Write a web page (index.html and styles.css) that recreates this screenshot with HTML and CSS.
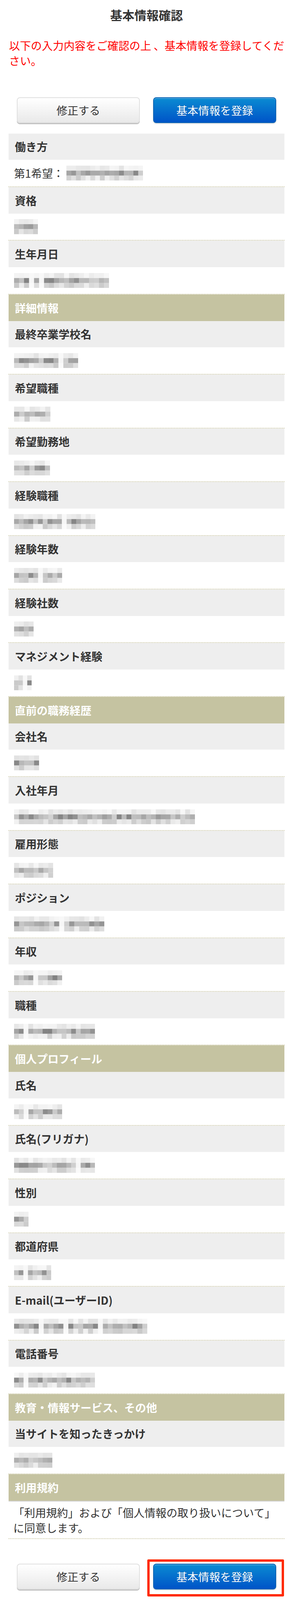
FILE: index.html
```html
<!DOCTYPE html>
<html lang="ja">
<head>
    <meta charset="UTF-8">
    <meta name="viewport" content="width=device-width, initial-scale=1.0">
    <title>基本情報確認</title>
    <link rel="stylesheet" href="styles.css">
</head>
<body>
    <h1 class="page-title">基本情報確認</h1>
    <p class="notice">以下の入力内容をご確認の上 、基本情報を登録してください。</p>

    <div class="btn-row">
        <button class="btn btn-back">修正する</button>
        <button class="btn btn-submit">基本情報を登録</button>
    </div>

    <div class="confirm-list">
        <div class="label">働き方</div>
        <div class="value">第1希望：<span class="mosaic mosaic-inline" data-w="196"></span></div>
        <div class="label">資格</div>
        <div class="value"><span class="mosaic" data-w="61"></span></div>
        <div class="label">生年月日</div>
        <div class="value"><span class="mosaic" data-w="243"></span></div>

        <div class="section">詳細情報</div>
        <div class="label">最終卒業学校名</div>
        <div class="value"><span class="mosaic" data-w="164"></span></div>
        <div class="label">希望職種</div>
        <div class="value"><span class="mosaic" data-w="93"></span></div>
        <div class="label">希望勤務地</div>
        <div class="value"><span class="mosaic" data-w="92"></span></div>
        <div class="label">経験職種</div>
        <div class="value"><span class="mosaic" data-w="208"></span></div>
        <div class="label">経験年数</div>
        <div class="value"><span class="mosaic" data-w="123"></span></div>
        <div class="label">経験社数</div>
        <div class="value"><span class="mosaic" data-w="50"></span></div>
        <div class="label">マネジメント経験</div>
        <div class="value"><span class="mosaic" data-w="45"></span></div>

        <div class="section">直前の職務経歴</div>
        <div class="label">会社名</div>
        <div class="value"><span class="mosaic" data-w="64"></span></div>
        <div class="label">入社年月</div>
        <div class="value"><span class="mosaic" data-w="463"></span></div>
        <div class="label">雇用形態</div>
        <div class="value"><span class="mosaic" data-w="100"></span></div>
        <div class="label">ポジション</div>
        <div class="value"><span class="mosaic" data-w="231"></span></div>
        <div class="label">年収</div>
        <div class="value"><span class="mosaic" data-w="123"></span></div>
        <div class="label">職種</div>
        <div class="value"><span class="mosaic" data-w="207"></span></div>

        <div class="section">個人プロフィール</div>
        <div class="label">氏名</div>
        <div class="value"><span class="mosaic" data-w="123"></span></div>
        <div class="label">氏名(フリガナ)</div>
        <div class="value"><span class="mosaic" data-w="207"></span></div>
        <div class="label">性別</div>
        <div class="value"><span class="mosaic" data-w="37"></span></div>
        <div class="label">都道府県</div>
        <div class="value"><span class="mosaic" data-w="95"></span></div>
        <div class="label">E-mail(ユーザーID)</div>
        <div class="value"><span class="mosaic" data-w="341"></span></div>
        <div class="label">電話番号</div>
        <div class="value"><span class="mosaic" data-w="207"></span></div>

        <div class="section">教育・情報サービス、その他</div>
        <div class="label">当サイトを知ったきっかけ</div>
        <div class="value"><span class="mosaic" data-w="98"></span></div>

        <div class="section">利用規約</div>
        <div class="agree">「利用規約」および「個人情報の取り扱いについて」に同意します。</div>
    </div>

    <div class="btn-row btn-row-bottom">
        <button class="btn btn-back">修正する</button>
        <button class="btn btn-submit">基本情報を登録</button>
        <div class="highlight"></div>
    </div>

    <script>
        // blurred values are drawn as grey mosaic cells
        let seed = 7;
        function rand() {
            seed = (seed * 9301 + 49297) % 233280;
            return seed / 233280;
        }

        function grey(v) {
            v = Math.round(v);
            return 'rgb(' + v + ',' + v + ',' + v + ')';
        }

        document.querySelectorAll('.mosaic').forEach(span => {
            const w = parseInt(span.dataset.w, 10);
            const cols = Math.max(2, Math.round(w / 12.5));
            const cw = w / cols;
            let rects = '';
            for (let c = 0; c < cols; c++) {
                const gap = c > 0 && c < cols - 1 && rand() < 0.07;
                const x = (c * cw).toFixed(2);
                const top = gap ? 248 : 226 + rand() * 22;
                const mid = gap ? 246 : (rand() < 0.2 ? 130 + rand() * 25 : 160 + rand() * 50);
                const bot = gap ? 250 : 200 + rand() * 42;
                rects += `<rect x="${x}" y="0" width="${(cw + 0.5).toFixed(2)}" height="14" fill="${grey(top)}"/>`;
                rects += `<rect x="${x}" y="14" width="${(cw + 0.5).toFixed(2)}" height="14" fill="${grey(mid)}"/>`;
                rects += `<rect x="${x}" y="28" width="${(cw + 0.5).toFixed(2)}" height="14" fill="${grey(bot)}"/>`;
            }
            span.innerHTML = `<svg width="${w}" height="42" viewBox="0 0 ${w} 42" preserveAspectRatio="none">${rects}</svg>`;
        });
    </script>
</body>
</html>
```

FILE: styles.css
```css
/* vertical sizes follow the screen height (the design is 750 x 4473) */
:root {
    --u: calc(100vh / 4473);
}
html {
    width: 750px;
}
body {
    margin: 0;
    padding-bottom: calc(var(--u) * 31 - 6px);
    font-family: "Noto Sans CJK JP", "Noto Sans", sans-serif;
    font-size: 28px;
    line-height: calc(var(--u) * 42);
    color: #333;
    background-color: #fff;
}
.page-title {
    margin: 0;
    padding-top: calc(var(--u) * 21);
    font-size: 31px;
    line-height: calc(var(--u) * 42);
    font-weight: bold;
    text-align: center;
    color: #333;
}
.notice {
    height: calc(var(--u) * 84);
    margin: calc(var(--u) * 43) 22px 0 23px;
    color: #ff0000;
}
.btn-row {
    display: flex;
    justify-content: center;
    gap: 34px;
    height: calc(var(--u) * 72);
    margin-top: calc(var(--u) * 82);
}
.btn {
    box-sizing: border-box;
    width: 315px;
    height: calc(var(--u) * 72);
    padding: 0;
    font-family: inherit;
    font-size: 28px;
    line-height: calc(var(--u) * 42);
    border-radius: 8px;
    cursor: pointer;
}
.btn-back {
    color: #333;
    background: linear-gradient(#ffffff, #e9e9e9);
    border: 2px solid #e0e0e0;
    box-shadow: 0 3px 0 #c2c2c2;
    text-shadow: 0 1px 0 #fff;
}
.btn-submit {
    color: #fff;
    background: linear-gradient(#0a8bd2, #0054c8);
    border: 2px solid #0862b4;
    box-shadow: inset 0 2px 0 rgba(255, 255, 255, 0.25), 0 2px 3px rgba(0, 0, 0, 0.15);
    text-shadow: 0 -1px 0 rgba(0, 0, 0, 0.2);
}
.confirm-list {
    margin: calc(var(--u) * 29) 22px 0;
}
.label {
    height: calc(var(--u) * 42);
    padding: calc(var(--u) * 16) 16px;
    font-weight: bold;
    white-space: nowrap;
    background-color: #eeeeee;
}
.value {
    display: flex;
    align-items: center;
    height: calc(var(--u) * 42);
    padding: calc(var(--u) * 16) 14px;
    white-space: nowrap;
    border-bottom: 2px dotted #c9c5a2;
}
.section {
    height: calc(var(--u) * 42);
    padding: calc(var(--u) * 16) 16px;
    font-weight: bold;
    white-space: nowrap;
    color: #fff;
    background-color: #c5c3a1;
}
.agree {
    height: calc(var(--u) * 84);
    padding: calc(var(--u) * 10) 12px calc(var(--u) * 9);
    border-top: 2px solid #d2d2d2;
    border-bottom: 2px dotted #c9c5a2;
}
.mosaic {
    display: inline-block;
    height: calc(var(--u) * 42);
}
.mosaic svg {
    display: block;
    height: 100%;
}
.mosaic-inline {
    margin-left: 6px;
}
.btn-row-bottom {
    position: relative;
    margin-top: calc(var(--u) * 69);
}
.highlight {
    position: absolute;
    top: calc(var(--u) * -12);
    left: 377px;
    width: 338px;
    height: calc(var(--u) * 103 - 12px);
    border: 6px solid #ff2a00;
    border-radius: 3px;
    pointer-events: none;
}
```
